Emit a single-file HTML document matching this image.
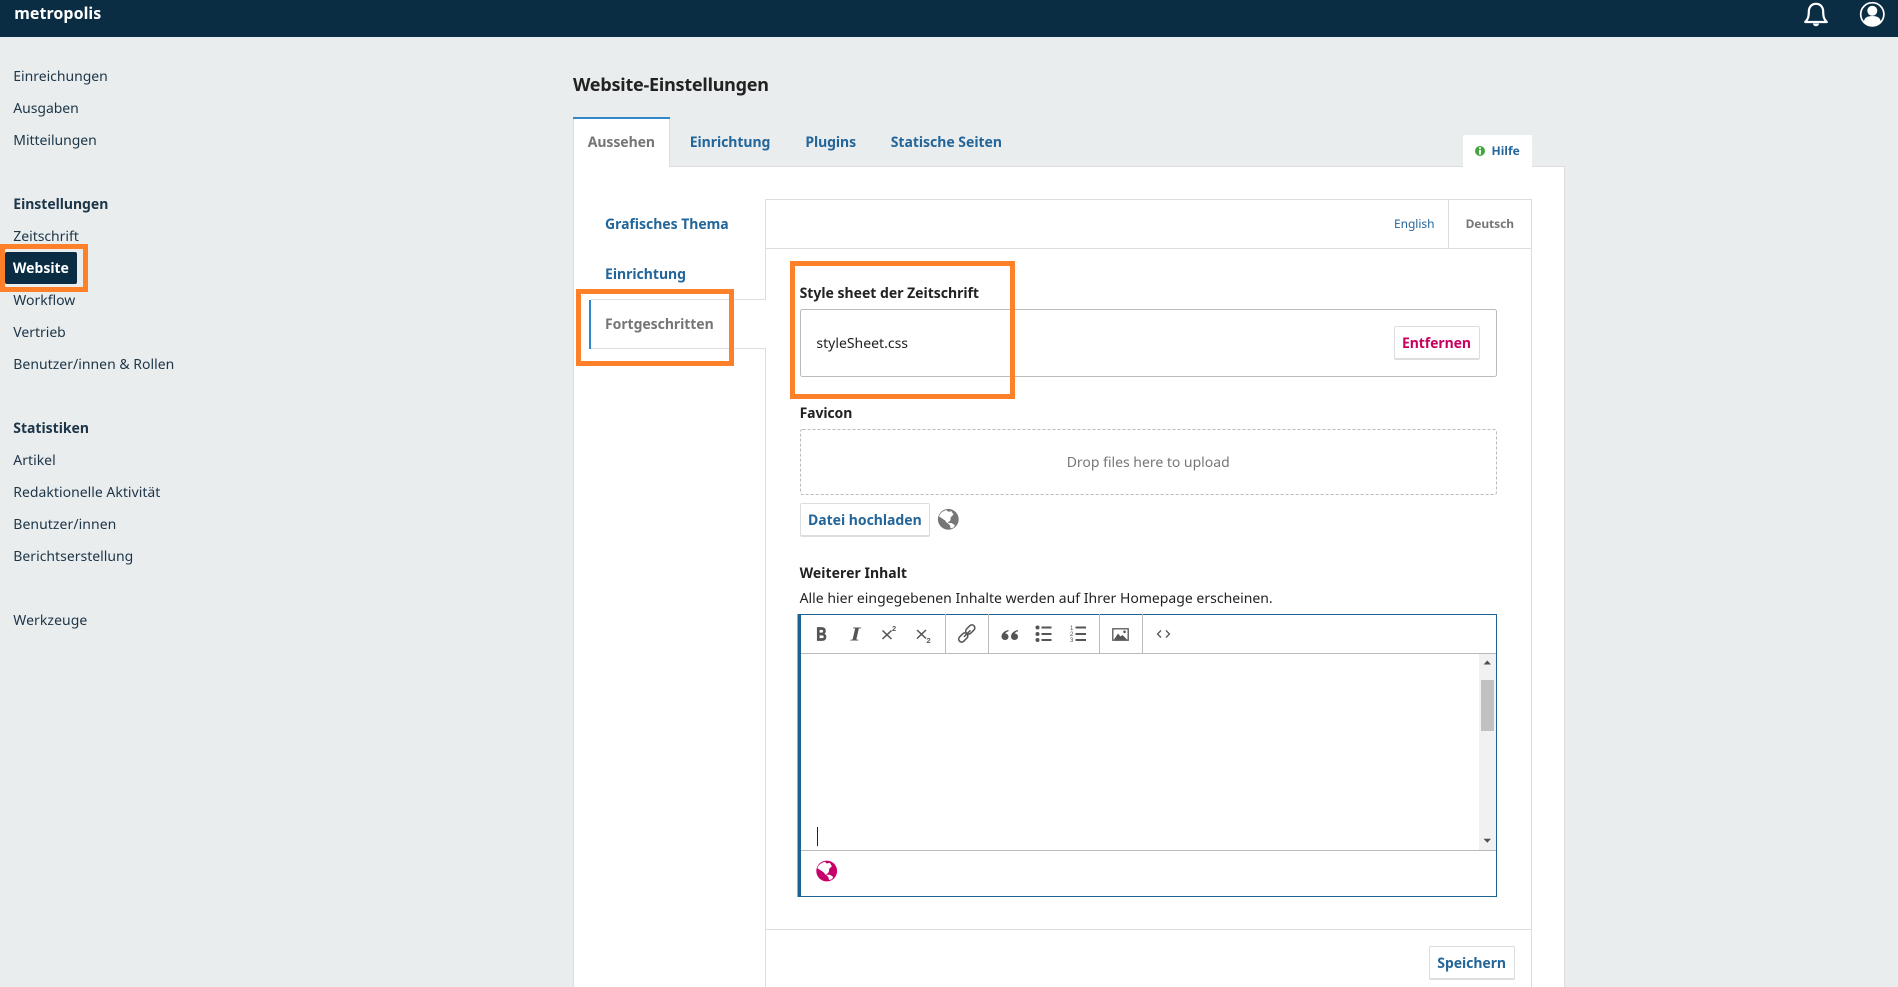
<!DOCTYPE html>
<html lang="de">
<head>
<meta charset="utf-8">
<title>Website-Einstellungen</title>
<style>
html,body{margin:0;padding:0;background:#eaedee;width:1898px;height:987px;overflow:hidden}
svg{display:block}
text{font-family:"Noto Sans","DejaVu Sans",sans-serif;font-size:14px;fill:#222;white-space:pre}
.b{font-weight:700;font-size:14px}
.side{fill:#1c3547}
.l{fill:#24669a}
.g{fill:#767676}
.ln{fill:#ddd}
.bx{fill:#bbb}
.ed{fill:#1e6292}
.ic{fill:#555;stroke:none}
.is{fill:none;stroke:#555;stroke-width:1.500}
.or{fill:none;stroke:#fe8028;stroke-width:5}
</style>
</head>
<body>
<svg xmlns="http://www.w3.org/2000/svg" width="1898" height="987" viewBox="0 0 1898 987">
<defs>
<path id="land" stroke="#fff" stroke-width=".6" stroke-linejoin="round" d="M-9-3C-8-6-5-8-2-9L0-7.200 3-7.800 4.800-4.800 2.200-2.200 1.800 1-1 3.600-3 1-6-1zM0 4 3 4 6.200 6 5 8 2.500 8.600 2 6z"/>
</defs>

<!-- header -->
<rect x="0" y="0" width="1898" height="37" fill="#0a2d44"/>
<text x="14.300" y="19" class="b" style="font-size:16px;fill:#fff" textLength="87">metropolis</text>
<path d="M1816 3.800c-4.700 0-7.200 3.600-7.200 8 0 5.200-1 7.500-3.600 10.200h21.600c-2.600-2.700-3.600-5-3.600-10.200 0-4.400-2.500-8-7.200-8z" fill="none" stroke="#fff" stroke-width="2.200" stroke-linejoin="round"/>
<path d="M1813 23.500h6c0 1.700-1.300 2.700-3 2.700s-3-1-3-2.700z" fill="#fff"/>
<circle cx="1872.300" cy="14.300" r="11.600" fill="none" stroke="#fff" stroke-width="1.700"/>
<circle cx="1872.300" cy="10.800" r="5" fill="#fff"/>
<path d="M1863.800 22.300c.2-4.600 3.600-6.300 8.500-6.300s8.300 1.700 8.500 6.300a11.200 11.200 0 0 1-17 0z" fill="#fff"/>

<!-- sidebar -->
<g>
<text class="side" x="13.300" y="81" textLength="94.500">Einreichungen</text>
<text class="side" x="13.300" y="113" textLength="65.500">Ausgaben</text>
<text class="side" x="13.300" y="145" textLength="83.500">Mitteilungen</text>
<text class="side b" x="13.300" y="209" textLength="95">Einstellungen</text>
<text class="side" x="13.300" y="241" textLength="65.500">Zeitschrift</text>
<rect x="5" y="252" width="72" height="32" rx="2" fill="#0a2d44"/>
<text class="b" style="fill:#fff" x="12.900" y="273" textLength="56">Website</text>
<text class="side" x="13.300" y="305" textLength="62">Workflow</text>
<text class="side" x="13.300" y="337" textLength="52.500">Vertrieb</text>
<text class="side" x="13.300" y="369" textLength="161">Benutzer/innen &amp; Rollen</text>
<text class="side b" x="13.300" y="433" textLength="75.700">Statistiken</text>
<text class="side" x="13.300" y="465" textLength="42.400">Artikel</text>
<text class="side" x="13.300" y="497" textLength="147">Redaktionelle Aktivität</text>
<text class="side" x="13.300" y="529" textLength="103">Benutzer/innen</text>
<text class="side" x="13.300" y="561" textLength="120">Berichtserstellung</text>
<text class="side" x="13.300" y="625" textLength="74">Werkzeuge</text>
</g>

<!-- title -->
<text x="573" y="91" style="font-size:18px;font-weight:700;fill:#222" textLength="196">Website-Einstellungen</text>

<!-- main panel -->
<rect x="573" y="166" width="992" height="830" fill="#fff"/>
<rect class="ln" x="573" y="166" width="992" height="1"/>
<rect class="ln" x="573" y="166" width="1" height="830"/>
<rect class="ln" x="1564" y="166" width="1" height="830"/>

<!-- tabs -->
<rect x="573" y="117" width="97" height="50" fill="#fff"/>
<rect class="ln" x="669" y="119" width="1" height="48"/>
<rect class="ln" x="573" y="119" width="1" height="48"/>
<rect x="573" y="117" width="97" height="2" fill="#2f88cc"/>
<text class="b g" x="587.700" y="147" textLength="67.300">Aussehen</text>
<text class="b l" x="689.700" y="147" textLength="80.700">Einrichtung</text>
<text class="b l" x="805.400" y="147" textLength="50.700">Plugins</text>
<text class="b l" x="890.700" y="147" textLength="111.300">Statische Seiten</text>

<!-- help -->
<path d="M1463 167v-30a2 2 0 0 1 2-2h65a2 2 0 0 1 2 2v30z" fill="#fff"/>
<circle cx="1480" cy="151" r="5" fill="#3fa63a"/>
<rect x="1479" y="150" width="2" height="4.500" fill="#fff"/>
<rect x="1479" y="147.300" width="2" height="1.800" fill="#fff"/>
<text class="b l" style="font-size:12px" x="1491.500" y="155" textLength="28.300">Hilfe</text>

<!-- secondary nav -->
<text class="b l" x="605" y="229" textLength="123.700">Grafisches Thema</text>
<text class="b l" x="605" y="279" textLength="81">Einrichtung</text>
<text class="b g" x="605" y="329" textLength="108.700">Fortgeschritten</text>
<rect class="ln" x="591" y="299" width="175" height="1"/>
<rect class="ln" x="591" y="348" width="175" height="1"/>
<rect x="589" y="300" width="2" height="49" fill="#2f88cc"/>

<!-- inner panel -->
<rect class="ln" x="765" y="199" width="767" height="1"/>
<rect class="ln" x="765" y="248" width="767" height="1"/>
<rect class="ln" x="765" y="199" width="1" height="101"/>
<rect class="ln" x="765" y="348" width="1" height="650"/>
<rect class="ln" x="1531" y="199" width="1" height="800"/>
<rect class="ln" x="1448" y="199" width="1" height="50"/>
<rect class="ln" x="765" y="929" width="767" height="1"/>
<text class="l" style="font-size:12px" x="1394" y="228" textLength="40.500">English</text>
<text class="b g" style="font-size:12px" x="1465.600" y="228" textLength="48.400">Deutsch</text>

<!-- stylesheet -->
<text class="b" x="799.600" y="298" textLength="179.400">Style sheet der Zeitschrift</text>
<rect x="800.500" y="309.500" width="696" height="67" rx="2" fill="#fff" stroke="#bbb"/>
<text x="816.400" y="348" textLength="91.600">styleSheet.css</text>
<rect x="1394" y="326" width="86" height="34" rx="2" fill="#ddd"/>
<rect x="1395" y="327" width="84" height="31" fill="#fff"/>
<text class="b" style="fill:#c9005f" x="1402" y="348" textLength="69">Entfernen</text>

<!-- favicon -->
<text class="b" x="799.600" y="418" textLength="52.700">Favicon</text>
<rect x="800.500" y="429.500" width="696" height="65" rx="2" fill="#fff" stroke="#bbb" stroke-dasharray="3 2"/>
<text class="g" x="1066.700" y="467" textLength="163">Drop files here to upload</text>
<rect x="800" y="503" width="130" height="34" rx="2" fill="#ddd"/>
<rect x="801" y="504" width="128" height="31" fill="#fff"/>
<text class="b l" x="808" y="525" textLength="113.700">Datei hochladen</text>
<circle cx="948.300" cy="519.300" r="10.400" fill="#767676"/>
<use href="#land" x="948.300" y="519.300" fill="#fff"/>

<!-- additional content -->
<text class="b" x="799.600" y="578" textLength="107.400">Weiterer Inhalt</text>
<text x="799.600" y="603" textLength="473.100">Alle hier eingegebenen Inhalte werden auf Ihrer Homepage erscheinen.</text>

<!-- editor -->
<rect x="798" y="614" width="699" height="283" fill="#fff"/>
<rect class="ed" x="798" y="614" width="699" height="1"/>
<rect class="ed" x="798" y="896" width="699" height="1"/>
<rect class="ed" x="1496" y="614" width="1" height="283"/>
<rect class="ed" x="797.500" y="614" width="3.500" height="283"/>
<rect class="bx" x="801" y="653" width="695" height="1"/>
<rect class="bx" x="801" y="850" width="695" height="1"/>
<rect class="bx" x="945" y="614" width="1" height="39"/>
<rect class="bx" x="988" y="614" width="1" height="39"/>
<rect class="bx" x="1099" y="614" width="1" height="39"/>
<rect class="bx" x="1142" y="614" width="1" height="39"/>

<!-- toolbar -->
<text x="816.300" y="640.500" textLength="10.500" lengthAdjust="spacingAndGlyphs" style="font-size:18px;font-weight:700;fill:#555;stroke:#555;stroke-width:.7px;font-family:'Liberation Sans',sans-serif">B</text>
<text x="850.500" y="640.500" textLength="10" lengthAdjust="spacingAndGlyphs" style="font-size:20px;font-weight:700;font-style:italic;fill:#555;font-family:'Liberation Serif',serif">I</text>
<path class="is" d="M882.500 630.500l9 8.500m0-8.500l-9 8.500"/>
<text x="892" y="631" style="font-size:7.500px;font-weight:700;fill:#555;font-family:'Liberation Sans',sans-serif">2</text>
<path class="is" d="M917 630l9 8.500m0-8.500l-9 8.500"/>
<text x="926.500" y="643" style="font-size:7.500px;font-weight:700;fill:#555;font-family:'Liberation Sans',sans-serif">2</text>
<g fill="none" stroke="#555" stroke-width="1.500">
<rect x="965" y="626.500" width="10.500" height="6" rx="3" transform="rotate(-45 970.250 629.500)"/>
<rect x="958" y="634.500" width="10.500" height="6" rx="3" transform="rotate(-45 963.250 637.500)"/>
<path d="M964 636.800l6.500-6.500"/>
</g>
<path class="ic" d="M1008.500 630c-3.500.6-7 3-7 6.500 0 2 1.500 3.500 3.500 3.500s3.500-1.500 3.500-3.300-1.300-3.100-3.200-3.100c.3-1 1.700-2 3.200-2.400zM1018 630c-3.500.6-7 3-7 6.500 0 2 1.500 3.500 3.500 3.500s3.500-1.500 3.500-3.300-1.300-3.100-3.200-3.100c.3-1 1.700-2 3.200-2.400z"/>
<circle class="ic" cx="1037.500" cy="627.500" r="2"/>
<circle class="ic" cx="1037.500" cy="634" r="2"/>
<circle class="ic" cx="1037.500" cy="640" r="2"/>
<rect class="ic" x="1041.500" y="626.500" width="10" height="2"/>
<rect class="ic" x="1041.500" y="633" width="10" height="2"/>
<rect class="ic" x="1041.500" y="639" width="10" height="2"/>
<text x="1070" y="630" style="font-size:6px;fill:#555;font-family:'Liberation Sans',sans-serif">1</text>
<text x="1070" y="636" style="font-size:6px;fill:#555;font-family:'Liberation Sans',sans-serif">2</text>
<text x="1070" y="642" style="font-size:6px;fill:#555;font-family:'Liberation Sans',sans-serif">3</text>
<rect class="ic" x="1075.500" y="626.500" width="10.500" height="2"/>
<rect class="ic" x="1075.500" y="633" width="10.500" height="2"/>
<rect class="ic" x="1075.500" y="639" width="10.500" height="2"/>
<rect x="1112.800" y="628.800" width="15.400" height="11.400" fill="#fff" stroke="#555" stroke-width="1.300"/>
<path class="ic" d="M1114 639.500l4-6 2.500 3 2-1.500 4.500 4.500z"/>
<circle class="ic" cx="1124.500" cy="631.800" r="1.300"/>
<path d="M1161 630.500l-3.500 3.500 3.500 3.500M1166 630.500l3.500 3.500-3.500 3.500" fill="none" stroke="#555" stroke-width="1.300"/>

<!-- scrollbar -->
<rect x="1479" y="654" width="17" height="196" fill="#f1f1f1"/>
<rect x="1481" y="680" width="13" height="51" fill="#c1c1c1"/>
<path d="M1487.300 660.500l3.700 4h-7.400z" fill="#505050"/>
<path d="M1487.300 842.800l3.700-4h-7.400z" fill="#505050"/>

<!-- caret and locale globe -->
<rect x="817" y="827" width="1" height="19" fill="#222"/>
<circle cx="826.700" cy="871" r="10.400" fill="#c8006a"/>
<use href="#land" x="826.700" y="871" fill="#fff"/>

<!-- save -->
<rect x="1429" y="946" width="86" height="34" rx="2" fill="#ddd"/>
<rect x="1430" y="947" width="84" height="31" fill="#fff"/>
<text class="b l" x="1437.300" y="968" textLength="68.700">Speichern</text>

<!-- orange annotation frames -->
<rect class="or" x="2.500" y="246.500" width="83" height="43"/>
<rect class="or" x="578.500" y="291.500" width="153" height="72"/>
<rect class="or" x="792.500" y="263.500" width="220" height="133"/>
</svg>
</body>
</html>
